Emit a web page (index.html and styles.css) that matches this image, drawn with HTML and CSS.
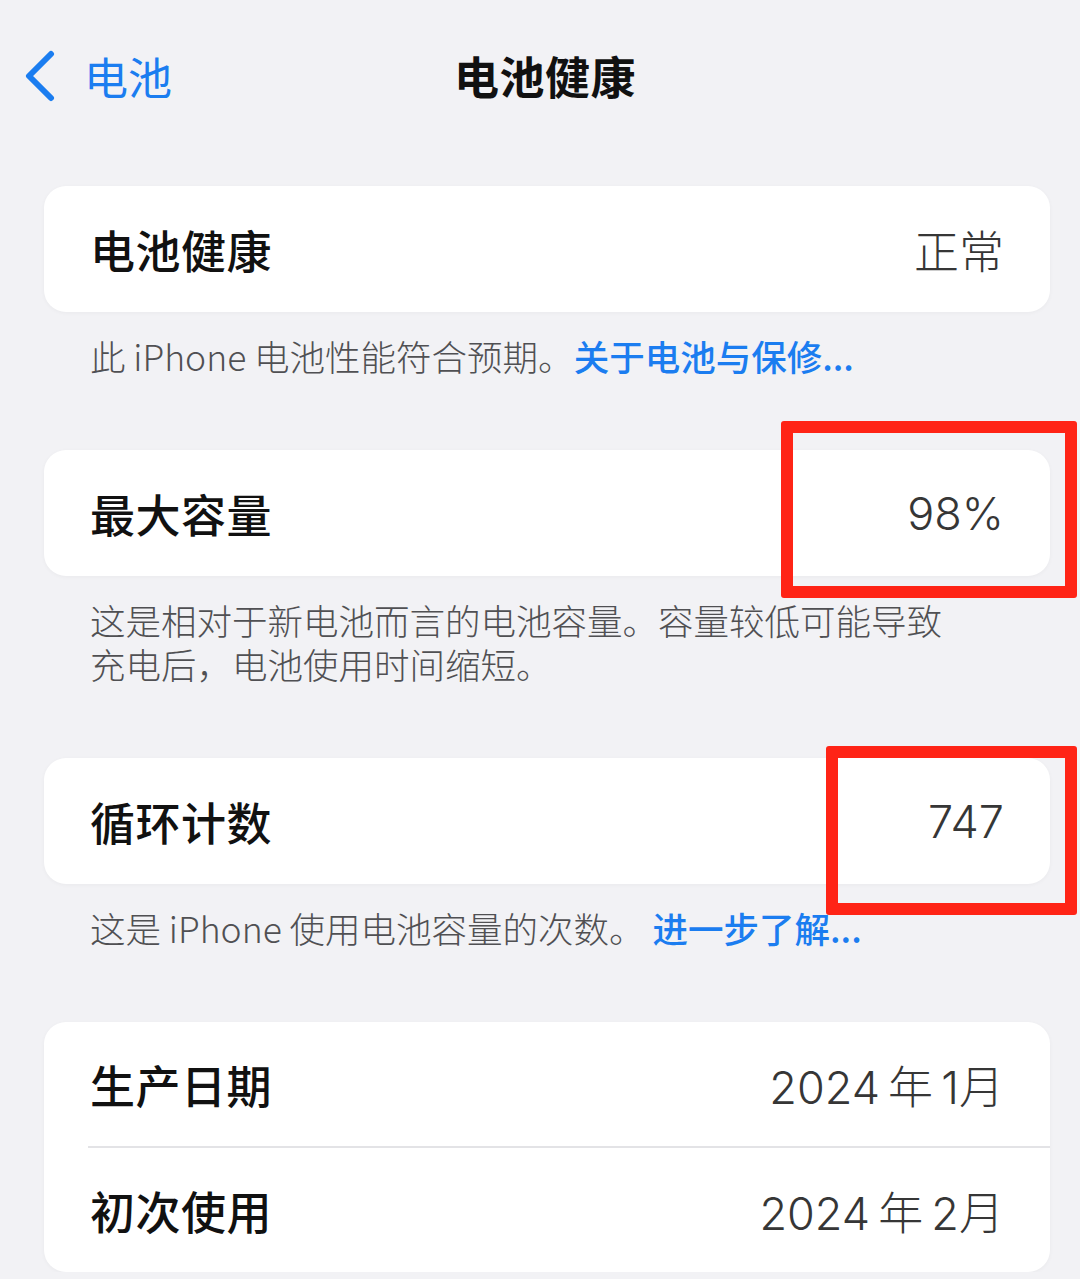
FILE: index.html
```html
<!DOCTYPE html>
<html lang="zh-CN">
<head>
  <meta charset="UTF-8" />
  <meta name="viewport" content="width=device-width, initial-scale=1.0"/>
  <title>电池健康</title>
  <link rel="stylesheet" href="styles.css">
</head>
<body>
  <header class="nav">
    <a class="back" href="#">
      <svg class="chevron" width="36" height="52" viewBox="0 0 36 52">
        <path d="M29 4 L7 26 L29 48" fill="none" stroke="currentColor" stroke-width="6" stroke-linecap="round" stroke-linejoin="round"/>
      </svg>
      <span>电池</span>
    </a>
    <h1 class="title">电池健康</h1>
    <div></div>
  </header>

  <main class="content">
    <section class="group">
      <div class="card">
        <div class="row">
          <span class="label">电池健康</span>
          <span class="value cjk">正常</span>
        </div>
      </div>
      <p class="note">此 iPhone 电池性能符合预期。<a href="#">关于电池与保修...</a></p>
    </section>

    <section class="group">
      <div class="card">
        <div class="row">
          <span class="label">最大容量</span>
          <span class="value">98%</span>
        </div>
        <div class="mark mark-capacity"></div>
      </div>
      <p class="note">这是相对于新电池而言的电池容量。容量较低可能导致<br>充电后，电池使用时间缩短。</p>
    </section>

    <section class="group">
      <div class="card">
        <div class="row">
          <span class="label">循环计数</span>
          <span class="value">747</span>
        </div>
        <div class="mark mark-cycles"></div>
      </div>
      <p class="note">这是 iPhone 使用电池容量的次数。 <a href="#">进一步了解...</a></p>
    </section>

    <section class="group last">
      <div class="card">
        <div class="row short">
          <span class="label">生产日期</span>
          <span class="value">2024&#8201;年&#8201;1月</span>
        </div>
        <div class="row short">
          <span class="label">初次使用</span>
          <span class="value">2024&#8201;年&#8201;2月</span>
        </div>
      </div>
    </section>
  </main>
</body>
</html>
```

FILE: styles.css
```css
:root {
  --bg: #f2f2f5;
  --card: #ffffff;
  --text: #111111;
  --muted: #505053;
  --blue: #1b7df0;
  --red: #ff2416;
}

body {
  margin: 0;
  background: var(--bg);
  color: var(--text);
  font-family: "Noto Sans CJK SC", "Noto Sans", sans-serif;
}

.nav {
  display: grid;
  grid-template-columns: 1fr auto 1fr;
  align-items: center;
  height: 56px;
  padding: 43px 12px 87px 22px;
}

.back {
  display: flex;
  align-items: center;
  gap: 26px;
  color: var(--blue);
  text-decoration: none;
  font-size: 44px;
}

.chevron {
  display: block;
}

.title {
  margin: 0;
  font-size: 45px;
  font-weight: 700;
  letter-spacing: 0.5px;
}

.content {
  padding: 0 30px 0 44px;
}

.group {
  margin-bottom: 72px;
}

.group.last {
  margin-bottom: 0;
}

.card {
  position: relative;
  background: var(--card);
  border-radius: 22px;
  box-shadow: 0 1px 4px rgba(0, 0, 0, 0.04);
}

.row {
  display: flex;
  justify-content: space-between;
  align-items: center;
  height: 126px;
  padding: 0 46px 0 46px;
}

.row.short {
  height: 124px;
}

.row + .row {
  border-top: 2px solid #e3e3e6;
  margin-left: 44px;
  padding-left: 2px;
}

.label {
  font-size: 45px;
  font-weight: 500;
  letter-spacing: 0.5px;
}

.value {
  font-family: Inter, "Noto Sans CJK SC", sans-serif;
  font-size: 45px;
  font-weight: 300;
  color: #363636;
}

.value.cjk {
  font-family: "Noto Sans CJK SC", sans-serif;
}

.note {
  margin: 22px 0 0 46px;
  font-size: 35.5px;
  line-height: 44px;
  font-weight: 300;
  color: var(--muted);
}

.note a {
  color: var(--blue);
  font-weight: 500;
  text-decoration: none;
}

.mark {
  position: absolute;
  border: 12px solid var(--red);
  border-radius: 3px;
  box-sizing: border-box;
}

.mark-capacity {
  left: 737px;
  top: -29px;
  width: 296px;
  height: 177px;
}

.mark-cycles {
  left: 782px;
  top: -12px;
  width: 251px;
  height: 169px;
}
```
